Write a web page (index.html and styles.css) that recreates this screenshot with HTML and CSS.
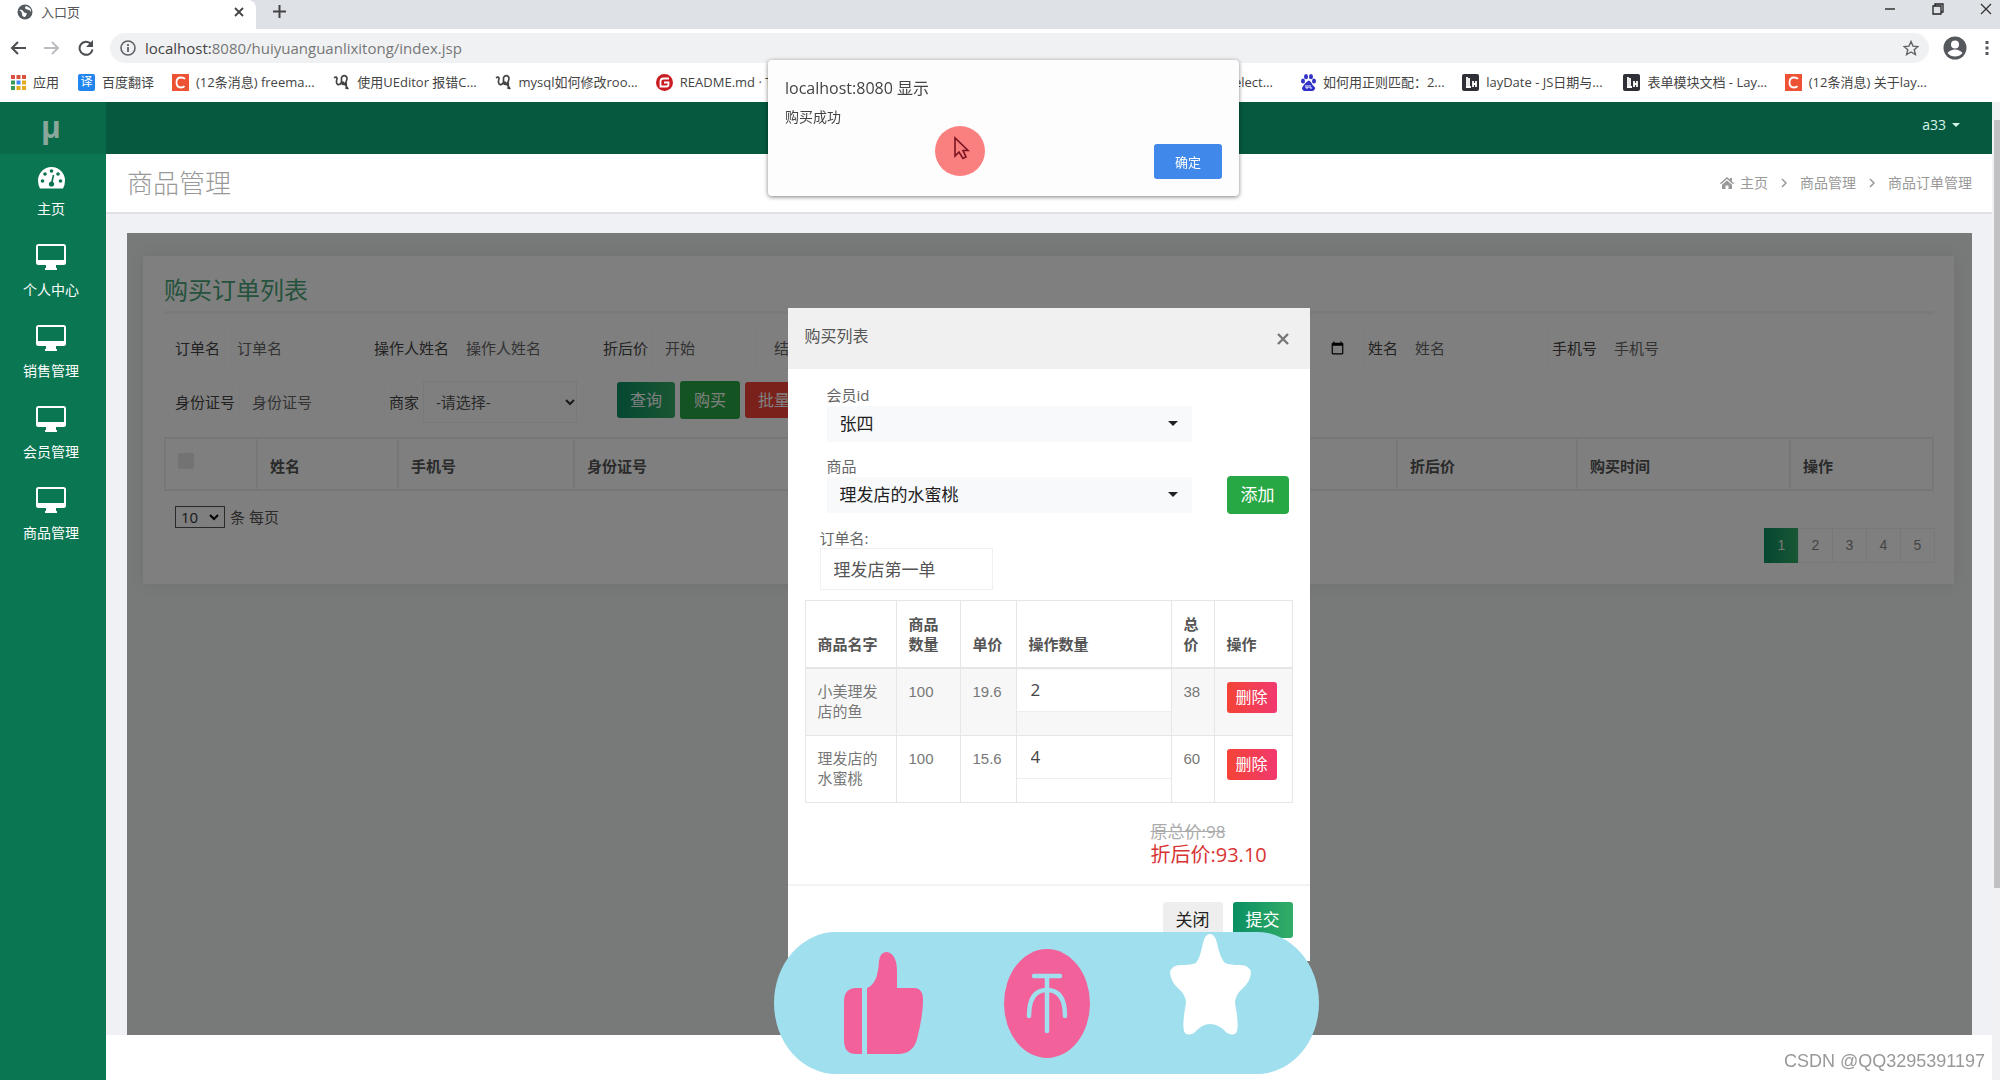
FILE: index.html
```html
<!DOCTYPE html>
<html lang="zh-CN">
<head>
<meta charset="utf-8">
<title>入口页</title>
<link rel="stylesheet" href="styles.css">
</head>
<body>
<svg class="defs" aria-hidden="true">
  <symbol id="monitor" viewBox="0 0 30 26"><path fill="currentColor" fill-rule="evenodd" d="M2.5 0h25Q30 0 30 2.500v16Q30 21 27.500 21H20v3h1v2H9v-2h1v-3H2.500Q0 21 0 18.500v-16Q0 0 2.500 0ZM2 2v14h26V2Z"/></symbol>
  <symbol id="chev" viewBox="0 0 6 10"><path d="M1 1l4 4-4 4" fill="none" stroke="currentColor" stroke-width="1.500"/></symbol>
  <symbol id="snake" viewBox="0 0 18 18"><path d="M1 4q4-2 3 2t1 5 4-2V4q1-3 4-2t1 6-5 2M10 8q4 4 6 8M14 9v7" fill="none" stroke="#444" stroke-width="1.800"/></symbol>
  <symbol id="csdn" viewBox="0 0 17 17"><path fill="#ee5234" d="M0 0h17v17H0z"/><path d="M13 5Q12 3.500 9 3.500 4.500 3.500 4.500 8.500t4.500 5q2.500 0 3.500-1.500" fill="none" stroke="#fff" stroke-width="1.800"/></symbol>
  <symbol id="layui" viewBox="0 0 17 17"><rect width="17" height="17" rx="2" fill="#2f2f38"/><path d="M5 3v10M4 13h5M7 4v9M11 7v6M14 7v6M11 10h3" fill="none" stroke="#fff" stroke-width="1.800"/></symbol>
</svg>

<header class="browser">
  <div class="tabs">
    <div class="tab">
      <svg width="16" height="16" viewBox="0 0 16 16"><circle cx="8" cy="8" r="7.500" fill="#555a5f"/><path d="M2 6q3-1 4 1t3 2-1 4q-3 0-3-3T2 6ZM9 2q-2 2 0 3t3 1 2 2q1-4-5-6Z" fill="#fff"/></svg>
      <span class="tab-name">入口页</span>
      <button class="plain" aria-label="关闭标签"><svg width="10" height="10" viewBox="0 0 10 10"><path d="M1 1l8 8M9 1L1 9" stroke="#444" stroke-width="1.800"/></svg></button>
    </div>
    <button class="plain new-tab" aria-label="新标签"><svg width="13" height="13" viewBox="0 0 13 13"><path d="M6.500 0v13M0 6.500h13" stroke="#444" stroke-width="2"/></svg></button>
    <div class="window-buttons">
      <button class="plain" aria-label="最小化"><svg width="12" height="12" viewBox="0 0 12 12"><path d="M1 6h10" stroke="#333" stroke-width="1.500"/></svg></button>
      <button class="plain" aria-label="还原"><svg width="12" height="12" viewBox="0 0 12 12"><path d="M1 3h8v8H1zM3 3V1h8v8H9" fill="none" stroke="#222" stroke-width="1.300"/></svg></button>
      <button class="plain" aria-label="关闭"><svg width="12" height="12" viewBox="0 0 12 12"><path d="M1 1l10 10M11 1L1 11" stroke="#333" stroke-width="1.300"/></svg></button>
    </div>
  </div>
  <div class="toolbar">
    <button class="plain" aria-label="后退"><svg width="16" height="14" viewBox="0 0 16 14"><path d="M16 7H2M8 1L2 7l6 6" fill="none" stroke="#4a4d51" stroke-width="2"/></svg></button>
    <button class="plain" aria-label="前进"><svg width="16" height="14" viewBox="0 0 16 14"><path d="M0 7h14M8 1l6 6-6 6" fill="none" stroke="#bbbdc0" stroke-width="2"/></svg></button>
    <button class="plain" aria-label="刷新"><svg width="16" height="16" viewBox="0 0 16 16"><path d="M13 4A6.500 6.500 0 1 0 14.500 9.500" fill="none" stroke="#4a4d51" stroke-width="2"/><path d="M15 0v7H8Z" fill="#4a4d51"/></svg></button>
    <div class="address">
      <svg width="16" height="16" viewBox="0 0 16 16"><circle cx="8" cy="8" r="7" fill="none" stroke="#5f6368" stroke-width="1.600"/><path d="M8 7v5M8 4v2" stroke="#5f6368" stroke-width="1.800"/></svg>
      <span class="url"><b>localhost:</b>8080/huiyuanguanlixitong/index.jsp</span>
      <svg width="16" height="16" viewBox="0 0 16 16"><path d="M8 1.500l2 4.600 5 .4-3.800 3.200 1.200 4.800L8 12l-4.400 2.500 1.200-4.800L1 6.500l5-.4Z" fill="none" stroke="#5f6368" stroke-width="1.400"/></svg>
    </div>
    <svg class="avatar" width="24" height="24" viewBox="0 0 24 24"><circle cx="12" cy="12" r="11.500" fill="#55585d"/><circle cx="12" cy="8.500" r="4" fill="#fff"/><path d="M4.500 17q3-3.500 7.500-3.500t7.500 3.500q-3 3.500-7.500 3.500T4.500 17Z" fill="#fff"/></svg>
    <svg width="4" height="16" viewBox="0 0 4 16"><path d="M.5 1h3v3h-3zM.5 6.500h3v3h-3zM.5 12h3v3h-3z" fill="#55585d"/></svg>
  </div>
  <nav class="bookmarks">
    <a href="#"><svg width="15" height="15" viewBox="0 0 15 15"><path d="M0 0h4v4H0zM5.500 0h4v4h-4zM11 0h4v4h-4z" fill="#d9503f"/><path d="M0 5.500h4v4H0z" fill="#3a9a55"/><path d="M5.500 5.500h4v4h-4z" fill="#4285f4"/><path d="M11 5.500h4v4h-4zM5.500 11h4v4h-4zM11 11h4v4h-4z" fill="#e3ab1c"/><path d="M0 11h4v4H0z" fill="#3a9a55"/></svg>应用</a>
    <a href="#"><span class="fanyi">译</span>百度翻译</a>
    <a href="#"><svg width="17" height="17"><use href="#csdn"/></svg>(12条消息) freema...</a>
    <a href="#"><svg width="17" height="17"><use href="#snake"/></svg>使用UEditor 报错C...</a>
    <a href="#"><svg width="17" height="17"><use href="#snake"/></svg>mysql如何修改roo...</a>
    <a href="#"><svg width="17" height="17" viewBox="0 0 17 17"><circle cx="8.500" cy="8.500" r="8.500" fill="#c71d23"/><path d="M13 4.500H7.500q-3 0-3 3v5h6q2 0 2-2V8.500H8" fill="none" stroke="#fff" stroke-width="1.800"/></svg>README.md · T</a>
    <a href="#" class="half-hidden">select...</a>
    <a href="#"><svg width="15" height="17" viewBox="0 0 15 17"><g fill="#3232c8"><ellipse cx="2" cy="7" rx="2" ry="2.500"/><ellipse cx="5" cy="2.700" rx="2" ry="2.600"/><ellipse cx="10" cy="2.700" rx="2" ry="2.600"/><ellipse cx="13" cy="7" rx="2" ry="2.500"/><path d="M7.500 6.500q2 0 3 2.500t3 4-1.500 4H3q-3-1.500-1.500-4t3-4 3-2.500Z"/></g><path d="M5 11v3h2v-3M9 11v3h2" stroke="#fff" fill="none"/></svg>如何用正则匹配：2...</a>
    <a href="#"><svg width="17" height="17"><use href="#layui"/></svg>layDate - JS日期与...</a>
    <a href="#"><svg width="17" height="17"><use href="#layui"/></svg>表单模块文档 - Lay...</a>
    <a href="#"><svg width="17" height="17"><use href="#csdn"/></svg>(12条消息) 关于lay...</a>
  </nav>
</header>

<div class="app">
  <aside class="sidebar">
    <div class="brand">μ</div>
    <nav>
      <a href="#" class="home"><svg width="27" height="22" viewBox="0 0 27 22"><path d="M13.500 0A13.500 13.500 0 0 0 0 13.500Q0 18 2 21.500h23q2-3.500 2-8A13.500 13.500 0 0 0 13.500 0Z" fill="currentColor"/><g fill="#0a7250"><circle cx="4.500" cy="14" r="1.800"/><circle cx="7" cy="7" r="1.800"/><circle cx="13.500" cy="4" r="1.800"/><circle cx="20" cy="7" r="1.800"/><circle cx="22.500" cy="14" r="1.800"/><circle cx="13.500" cy="17" r="2.600"/></g><path d="M13.500 17l2-9" stroke="#0a7250" stroke-width="1.600"/></svg>主页</a>
      <a href="#"><svg width="30" height="26"><use href="#monitor"/></svg>个人中心</a>
      <a href="#"><svg width="30" height="26"><use href="#monitor"/></svg>销售管理</a>
      <a href="#"><svg width="30" height="26"><use href="#monitor"/></svg>会员管理</a>
      <a href="#"><svg width="30" height="26"><use href="#monitor"/></svg>商品管理</a>
    </nav>
  </aside>

  <div class="main">
    <div class="topbar"><button class="plain user">a33 <i class="caret"></i></button></div>
    <div class="page-head">
      <h1>商品管理</h1>
      <nav class="crumbs">
        <a href="#"><svg width="14" height="12" viewBox="0 0 14 12"><path d="M7 0l3 2.600V1h2v3.400L14 6.200 13 7.200 7 2 1 7.200 0 6.200ZM2 7.800L7 3.500l5 4.300V12H8.500V8.500h-3V12H2Z" fill="currentColor"/></svg>主页</a>
        <svg width="6" height="10"><use href="#chev"/></svg>
        <a href="#">商品管理</a>
        <svg width="6" height="10"><use href="#chev"/></svg>
        <a href="#">商品订单管理</a>
      </nav>
    </div>

    <div class="content">
      <div class="frame">
        <section class="card">
          <h2>购买订单列表</h2>
          <form class="filters">
            <div class="row">
              <label for="f1">订单名</label><input id="f1" placeholder="订单名">
              <label for="f2">操作人姓名</label><input id="f2" placeholder="操作人姓名">
              <label for="f3">折后价</label><input id="f3" class="short" placeholder="开始"><input class="short" placeholder="结束" aria-label="结束">
              <input type="date" aria-label="购买时间">
              <label for="f5">姓名</label><input id="f5" placeholder="姓名">
              <label for="f6">手机号</label><input id="f6" placeholder="手机号">
            </div>
            <div class="row">
              <label for="f7">身份证号</label><input id="f7" placeholder="身份证号">
              <label for="f8">商家</label>
              <span class="select-wrap"><select id="f8"><option>-请选择-</option></select><svg width="10" height="7" viewBox="0 0 10 7"><path d="M1 1l4 4 4-4" fill="none" stroke="#333" stroke-width="2"/></svg></span>
              <div class="actions">
                <button type="button" class="btn green">查询</button>
                <button type="button" class="btn buy">购买</button>
                <button type="button" class="btn red">批量删除</button>
              </div>
            </div>
          </form>
          <table class="orders">
            <colgroup><col class="w1"><col class="w2"><col class="w3"><col><col class="w4"><col class="w5"><col class="w6"></colgroup>
            <tr><th><input type="checkbox" disabled aria-label="全选"></th><th>姓名</th><th>手机号</th><th>身份证号</th><th>折后价</th><th>购买时间</th><th>操作</th></tr>
          </table>
          <div class="per-page">
            <span class="count-wrap"><select id="count"><option>10</option></select><svg width="10" height="7" viewBox="0 0 10 7"><path d="M1 1l4 4 4-4" fill="none" stroke="#000" stroke-width="2"/></svg></span>
            <label for="count">条 每页</label>
          </div>
          <nav class="pages"><a href="#" class="on">1</a><a href="#">2</a><a href="#">3</a><a href="#">4</a><a href="#">5</a></nav>
        </section>
        <div class="backdrop"></div>

        <section class="modal" role="dialog" aria-labelledby="mt">
          <header><h3 id="mt">购买列表</h3><button class="plain" aria-label="关闭"><svg width="12" height="12" viewBox="0 0 12 12"><path d="M1 1l10 10M11 1L1 11" stroke="#777" stroke-width="2.400"/></svg></button></header>
          <div class="modal-body">
            <div class="pick"><label for="m1">会员id</label><div class="pick-row"><button id="m1" class="picker">张四<i class="caret"></i></button></div></div>
            <div class="pick"><label for="m2">商品</label><div class="pick-row"><button id="m2" class="picker">理发店的水蜜桃<i class="caret"></i></button><button class="btn add">添加</button></div></div>
            <div class="name"><label for="m3">订单名:</label><input id="m3" value="理发店第一单"></div>
            <table class="goods">
              <colgroup><col class="g1"><col class="g2"><col class="g3"><col><col class="g5"><col class="g6"></colgroup>
              <thead><tr><th>商品名字</th><th>商品数量</th><th>单价</th><th>操作数量</th><th>总价</th><th>操作</th></tr></thead>
              <tbody>
                <tr><td>小美理发店的鱼</td><td>100</td><td>19.6</td><td class="qty"><input value="2" aria-label="操作数量"></td><td>38</td><td><button class="btn del">删除</button></td></tr>
                <tr><td>理发店的水蜜桃</td><td>100</td><td>15.6</td><td class="qty"><input value="4" aria-label="操作数量"></td><td>60</td><td><button class="btn del">删除</button></td></tr>
              </tbody>
            </table>
            <div class="totals"><s>原总价:98</s><strong>折后价:93.10</strong></div>
          </div>
          <footer><button class="btn close">关闭</button><button class="btn green">提交</button></footer>
        </section>
      </div>
    </div>
  </div>
  <div class="scrollbar"><div class="thumb"></div></div>
</div>

<div class="alert" role="alertdialog">
  <h4>localhost:8080 显示</h4>
  <p>购买成功</p>
  <button class="ok">确定</button>
  <svg class="pointer" width="50" height="50" viewBox="0 0 50 50"><circle cx="25" cy="25" r="25" fill="#fa8080"/><path d="M20 12v18l4-4 4 6.500 3-1.500-3-6.500h5Z" fill="#fa8080" stroke="#7a1420" stroke-width="1.600"/></svg>
</div>

<div class="reactions">
  <svg class="thumb-up" width="79" height="102" viewBox="0 0 79 102"><path fill="#f26199" d="M18 36V102H12Q0 102 0 88V50Q0 36 12 36ZM23 36Q34 32 35 9 36 0 43 0 53 2 53 20V36H70Q79 36 79 48 79 64 73 87 69 102 54 102H23Z"/></svg>
  <svg class="coin" width="86" height="109" viewBox="0 0 86 109"><ellipse cx="43" cy="54.500" rx="43" ry="54.500" fill="#f26199"/><path d="M30 27h26M43 27v55M25 67Q25 41 43 41T61 67" fill="none" stroke="#a0dfed" stroke-width="4.500" stroke-linecap="round"/></svg>
  <svg class="star" width="81" height="102" viewBox="0 0 81 102"><path fill="#fff" d="M40 0Q45 0 47 9 50 24 55 29 60 31 70 31 80 31 81 39 80 48 73 54 65 61 65 69 69 90 67 97 65 103 57 99 49 90 40 90 32 90 24 99 16 103 14 97 12 90 16 69 16 61 8 54 1 48 0 39 1 31 11 31 21 31 26 29 30 24 33 9 35 0 40 0Z"/></svg>
</div>
<div class="watermark">CSDN @QQ3295391197</div>
</body>
</html>
```
FILE: styles.css
```css
* { box-sizing: border-box; }
body {
  margin: 0;
  min-height: 100vh;
  display: flex;
  flex-direction: column;
  background: #fff;
  color: #555;
  font: 15px/20px "Open Sans", "Noto Sans CJK SC", sans-serif;
  overflow: hidden;
}
button, input, select { font: inherit; color: inherit; }
a { color: inherit; text-decoration: none; }
h1, h2, h3, h4, p { margin: 0; font-weight: 400; }
svg { flex: none; }
.defs { position: absolute; width: 0; height: 0; }
.plain { border: 0; padding: 0; background: none; display: flex; align-items: center; }
.caret { border: 5px solid transparent; border-top-color: currentColor; border-bottom: 0; }

/* browser chrome */
.tabs { display: flex; align-items: center; height: 29px; background: #dee1e6; }
.tab { display: flex; align-items: center; gap: 8px; width: 256px; height: 29px; padding: 0 12px 6px 17px; background: #fff; border-radius: 0 8px 0 0; }
.tab-name { flex: 1; font-size: 13px; }
.new-tab { margin: 0 0 6px 17px; }
.window-buttons { display: flex; gap: 36px; margin: 0 8px 12px auto; }
.toolbar { display: flex; align-items: center; gap: 18px; height: 39px; padding: 0 11px 2px 10px; }
.address { flex: 1; display: flex; align-items: center; gap: 9px; height: 30px; margin-left: -2px; padding: 0 10px; border-radius: 15px; background: #f0f1f3; }
.url { flex: 1; color: #777; }
.url b { font-weight: 400; color: #444; }
.avatar { margin-left: -4px; }
.bookmarks { display: grid; grid-template-columns: 67px 94px repeat(11, 1fr); align-items: center; height: 34px; padding: 0 54px 6px 11px; font-size: 13px; color: #444; white-space: nowrap; }
.bookmarks a { display: flex; align-items: center; gap: 7px; }
.bookmarks .half-hidden { grid-column: 9; justify-content: flex-end; padding-right: 28px; }
.fanyi { width: 17px; height: 17px; border-radius: 2px; background: #2286ee; color: #fff; font-size: 12px; line-height: 16px; text-align: center; }

/* application shell */
.app { flex: 1; display: flex; }
.sidebar { width: 106px; background: #0a7652; color: #fff; font-size: 14px; }
.brand { height: 52px; padding-right: 4px; background: #096a4a; color: #8aa79b; font: bold 30px/50px "Open Sans", sans-serif; text-align: center; }
.sidebar a { display: flex; flex-direction: column; align-items: center; gap: 10px; height: 81px; padding: 13px 4px 0 0; }
.sidebar .home { height: 77px; }
.main { flex: 1; display: flex; flex-direction: column; padding-bottom: 45px; }
.topbar { display: flex; justify-content: flex-end; height: 52px; padding: 0 32px 6px 0; background: #06583f; color: #d5f5e8; font-size: 14px; }
.user { gap: 6px; }
.user .caret { border-width: 4px 4px 0; }
.page-head { display: flex; align-items: center; justify-content: space-between; height: 60px; padding: 0 20px 0 21px; border-bottom: 2px solid #dfe1e5; }
h1 { color: #999; font-size: 26px; line-height: 40px; font-weight: 300; }
.crumbs { display: flex; align-items: center; gap: 13px; color: #999; font-size: 14px; }
.crumbs a { display: flex; align-items: center; gap: 6px; }
.scrollbar { width: 8px; padding: 18px 0 0 2px; background: #f1f1f3; }
.thumb { height: 80%; background: #c1c1c3; }
.content { flex: 1; display: flex; padding: 19px 20px 0 21px; background: #eff1f4; }
.frame { flex: 1; position: relative; padding: 23px 18px 0 16px; background: #f0f3f2; }
.backdrop { position: absolute; inset: 0; background: rgba(0, 0, 0, .5); }

/* order list */
.card { height: 328px; padding: 16px 20px 16px 21px; background: #fff; box-shadow: 0 0 14px #ddd; }
h2 { padding-bottom: 3px; border-bottom: 3px solid #f4f4f4; color: #4aa478; font-size: 24px; line-height: 36px; }
.filters { display: flex; flex-direction: column; gap: 12px; padding: 13px 0 14px 11px; }
.row { display: flex; align-items: center; gap: 4px; white-space: nowrap; }
.row label { flex: none; color: #444; }
.row input, .row select { flex: none; width: 146px; height: 42px; padding: 0 12px; border: 1px solid #fafafa; background: #fff; outline: 0; }
.row input::placeholder { color: #666; opacity: 1; }
.row .short { width: 105px; }
.row input[type="date"] { flex: none; width: 494px; padding-right: 16px; }
.select-wrap, .count-wrap { display: flex; align-items: center; }
.select-wrap select, .count-wrap select { appearance: none; }
.select-wrap select { width: 154px; border-color: #f2f2f2; }
.select-wrap svg { margin-left: -12px; }
.actions { display: flex; align-items: center; gap: 5px; margin: -4px 0 0 38px; }
.btn { height: 36px; padding: 0 13px; border: 0; border-radius: 3px; color: #fff; font-size: 16px; }
.green { background: linear-gradient(90deg, #0a8f62, #33ad68); }
.buy { height: 38px; padding: 0 14px; background: #28a745; }
.red { background: #f44336; }
table { width: 100%; border-collapse: collapse; table-layout: fixed; }
.orders th { height: 52px; padding: 4px 12px 0; border: 2px solid #eee; color: #555; font-weight: 700; text-align: left; }
.orders input { appearance: none; display: block; width: 16px; height: 16px; margin: 0 0 10px; border-radius: 2px; background: #e6e6e6; }
.w1 { width: 92px; } .w2 { width: 141px; } .w3 { width: 176px; }
.w4 { width: 180px; } .w5 { width: 213px; } .w6 { width: 143px; }
.per-page { display: flex; align-items: center; gap: 5px; padding: 15px 0 0 11px; }
.count-wrap select { width: 50px; height: 22px; padding: 0 5px; border: 1px solid #555; border-radius: 0; background: #fff; color: #333; }
.count-wrap svg { margin-left: -16px; margin-right: 6px; }
.pages { display: flex; justify-content: flex-end; font: 14px/33px "Liberation Sans", sans-serif; }
.pages a { width: 35px; height: 35px; margin-right: -1px; border: 1px solid #f0f0f0; color: #888; text-align: center; }
.pages .on { background: linear-gradient(90deg, #0a8f62, #33ad68); border: 0; color: #eee; line-height: 35px; }

/* purchase dialog */
.modal { position: absolute; top: 75px; left: 50%; width: 522px; margin-left: -262px; background: #fff; }
.modal header { display: flex; justify-content: space-between; height: 61px; padding: 18px 21px 0 17px; background: #f0f0f0; }
.modal header .plain { height: 26px; }
h3 { font-size: 16px; line-height: 20px; }
.modal-body { padding: 16px 17px 18px; }
.pick { height: 71px; padding-left: 22px; }
.pick label, .name label { display: block; color: #666; }
.pick-row { display: flex; align-items: center; justify-content: space-between; height: 37px; padding-right: 4px; }
.picker { display: flex; align-items: center; justify-content: space-between; width: 365px; height: 36px; padding: 0 14px 0 13px; border: 0; background: #f8f9fb; color: #222; font-size: 17px; }
.add { height: 38px; padding: 0 14px; border-radius: 4px; background: #28a745; font-size: 17px; }
.name { padding: 1px 0 0 15px; margin-bottom: 10px; }
.name input { display: block; width: 173px; height: 42px; padding: 0 13px 2px; border: 1px solid #f0f0f0; font-size: 17px; }
.goods th, .goods td { height: 66px; padding: 13px 12px; border: 1px solid #e6e6e6; text-align: left; }
.goods th { border-bottom-width: 2px; color: #555; font-weight: 700; vertical-align: bottom; }
.goods td { vertical-align: top; color: #777; font-family: "Liberation Sans", "Noto Sans CJK SC", sans-serif; }
.goods tbody tr:first-child { background: #f7f7f7; }
.goods .qty { padding: 1px 0 0; }
.qty input { display: block; width: 100%; height: 42px; padding: 0 14px 2px; border: 0; border-bottom: 1px solid #eee; background: #fff; color: #444; font: 17px/40px "Open Sans", sans-serif; }
.g1 { width: 91px; } .g2 { width: 64px; } .g3 { width: 56px; } .g5 { width: 43px; } .g6 { width: 78px; }
.del { display: block; height: 31px; padding: 0 9px; background: linear-gradient(90deg, #f44336, #f1396f); }
.totals { display: flex; flex-direction: column; width: 142px; margin: 17px 0 0 auto; line-height: 23px; }
.totals s { color: #aaa; font-size: 17px; }
.totals strong { color: #d93434; font-size: 20px; font-weight: 400; }
.modal footer { display: flex; justify-content: flex-end; gap: 10px; padding: 16px 17px 23px; border-top: 2px solid #f3f3f3; }
.modal footer .btn { font-size: 17px; }
.close { background: #eee; color: #222; }

/* layers over the page */
.alert { position: fixed; top: 60px; left: 768px; width: 471px; height: 136px; padding: 18px 17px; border-radius: 4px; background: #fdfdfd; box-shadow: 0 1px 4px rgba(0, 0, 0, .5); color: #444; }
h4 { font-size: 16px; }
.alert p { margin-top: 9px; font-size: 14px; }
.ok { position: absolute; right: 17px; bottom: 17px; width: 68px; height: 35px; border: 0; border-radius: 3px; background: #4088ea; color: #fff; font-size: 13px; }
.pointer { position: absolute; top: 66px; left: 167px; }
.reactions { position: fixed; left: 774px; bottom: 6px; display: flex; align-items: center; width: 545px; height: 142px; padding: 0 68px 0 70px; border-radius: 62px / 71px; background: #a0dfed; }
.coin { margin: 0 auto; }
.star { margin-bottom: 36px; }
.watermark { position: fixed; right: 15px; bottom: 9px; color: #999; font: 18px/20px "Liberation Sans", sans-serif; }
```
